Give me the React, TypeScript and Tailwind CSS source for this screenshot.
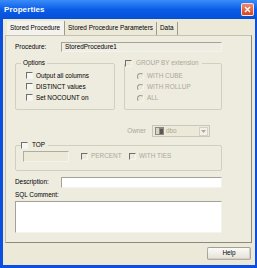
import React from 'react';

function Check({ disabled }: { disabled?: boolean }) {
  return (
    <span
      className={`inline-block w-[7px] h-[7px] shrink-0 border border-t-[#6f6f6f] border-l-[#6f6f6f] border-r-[#f4f4f0] border-b-[#f4f4f0] ${
        disabled ? 'bg-[#ECE9D8]' : 'bg-[#f7f6f2]'
      }`}
    />
  );
}

function Radio() {
  return (
    <span className="inline-block w-[7px] h-[7px] shrink-0 rounded-full border border-t-[#9c9a8f] border-l-[#9c9a8f] border-r-[#f4f4f0] border-b-[#f4f4f0] bg-[#ECE9D8]" />
  );
}

function Option({ label, disabled }: { label: string; disabled?: boolean }) {
  return (
    <div className="flex items-center gap-[3px] h-[11px]">
      <Check disabled={disabled} />
      <span className={disabled ? 'text-[#aca899]' : 'text-black'}>{label}</span>
    </div>
  );
}

function RadioOption({ label }: { label: string }) {
  return (
    <div className="flex items-center gap-[3px] h-[11px]">
      <Radio />
      <span className="text-[#aca899]">{label}</span>
    </div>
  );
}

export default function App() {
  const tabs = ['Stored Procedure', 'Stored Procedure Parameters', 'Data'];

  return (
    <div className="w-[257px] h-[268px] flex flex-col bg-[#0a4fe0] font-['Liberation_Sans',Arial,sans-serif] text-[6.4px] leading-none text-black overflow-hidden">
      {/* title bar */}
      <div className="h-[19px] shrink-0 flex items-center justify-between pl-[4px] pr-[3px] bg-gradient-to-b from-[#3a8cf7] via-[#0a5ce8] to-[#0550d8]">
        <span className="text-white font-bold text-[8px] tracking-[0.1px]">Properties</span>
        <span className="w-[13px] h-[13px] rounded-[2px] border border-white/80 bg-gradient-to-b from-[#e88a6c] to-[#d8431c] flex items-center justify-center">
          <svg width="7" height="7" viewBox="0 0 7 7">
            <path d="M1 1 L6 6 M6 1 L1 6" stroke="white" strokeWidth="1.4" />
          </svg>
        </span>
      </div>

      {/* body */}
      <div className="flex-1 ml-[3px] mr-[2px] mb-[3px] bg-[#ECE9D8] flex flex-col">
        {/* tabs */}
        <div className="flex items-end pl-[4px] pt-[3px] h-[16px] shrink-0">
          {tabs.map((t, i) => (
            <div
              key={t}
              className={`h-[13px] flex items-center px-[3px] border-r border-r-[#9d9a8c] ${
                i === 0 ? 'bg-[#f3f2ec] h-[14px] pr-[4px]' : 'bg-[#ECE9D8] pl-[3px]'
              }`}
            >
              {t}
            </div>
          ))}
        </div>

        {/* panel */}
        <div className="ml-[2px] mr-[3px] h-[208px] shrink-0 border border-[#c5c2b2] border-r-[#8d8a7d] border-b-[#8d8a7d] bg-[#eeebdf] pl-[9px] pt-[6px] flex flex-col">
          <div className="flex items-center h-[10px]">
            <span className="w-[46px]">Procedure:</span>
            <div className="w-[161px] h-[10px] border border-[#a4a196] border-r-[#f4f3ee] border-b-[#f4f3ee] bg-[#efece2] flex items-center pl-[3px]">
              StoredProcedure1
            </div>
          </div>

          <div className="flex gap-[9px] mt-[8px] w-[207px]">
            <fieldset className="w-[100px] h-[50px] border border-[#d0d0bf] rounded-[2px] px-[10px] pt-[4px]">
              <legend className="px-[2px] ml-[-5px]">Options</legend>
              <div className="flex flex-col">
                <Option label="Output all columns" />
                <Option label="DISTINCT values" />
                <Option label="Set NOCOUNT on" />
              </div>
            </fieldset>
            <fieldset className="w-[98px] h-[50px] border border-[#d0d0bf] rounded-[2px] px-[12px] pt-[4px]">
              <legend className="ml-[-12px] pr-[3px] flex items-center gap-[4px]">
                <Check disabled />
                <span className="text-[#aca899]">GROUP BY extension</span>
              </legend>
              <div className="flex flex-col">
                <RadioOption label="WITH CUBE" />
                <RadioOption label="WITH ROLLUP" />
                <RadioOption label="ALL" />
              </div>
            </fieldset>
          </div>

          <div className="flex items-center justify-end gap-[6px] w-[195px] mt-[15px] h-[12px]">
            <span className="text-[#aca899]">Owner</span>
            <div className="w-[58px] h-[12px] border border-[#c9c7ba] bg-[#ECE9D8] flex items-center justify-between pl-[2px] pr-[1px]">
              <div className="flex items-center gap-[2px]">
                <svg width="9" height="8" viewBox="0 0 9 8">
                  <rect x="0" y="0" width="9" height="8" fill="#8c8a80" />
                  <rect x="1" y="1" width="3" height="6" fill="#d8d5c8" />
                  <rect x="5" y="2" width="3" height="5" fill="#5a5850" />
                </svg>
                <span className="text-[#aca899]">dbo</span>
              </div>
              <div className="w-[9px] h-[9px] border border-[#d4d0c4] bg-[#f2f0e8] flex items-center justify-center">
                <svg width="5" height="3" viewBox="0 0 5 3">
                  <path d="M0 0 L5 0 L2.5 3 Z" fill="#aca899" />
                </svg>
              </div>
            </div>
          </div>

          <fieldset className="w-[207px] h-[29px] mt-[5px] border border-[#d0d0bf] rounded-[2px] px-[7px]">
            <legend className="ml-[-2px] pr-[3px] flex items-center gap-[4px]">
              <Check />
              <span>TOP</span>
            </legend>
            <div className="flex items-center mt-[2px]">
              <div className="w-[46px] h-[11px] border border-[#b0ada0] border-r-[#f4f3ee] border-b-[#f4f3ee] bg-[#ECE9D8]" />
              <div className="ml-[12px] w-[48px]">
                <Option label="PERCENT" disabled />
              </div>
              <Option label="WITH TIES" disabled />
            </div>
          </fieldset>

          <div className="flex items-center h-[11px] mt-[6px]">
            <span className="w-[46px]">Description:</span>
            <div className="w-[161px] h-[11px] border border-[#a4a196] border-r-[#f4f3ee] border-b-[#f4f3ee] bg-white" />
          </div>

          <div className="mt-[4px] h-[8px]">SQL Comment:</div>
          <div className="w-[207px] h-[32px] mt-[1px] border border-[#a4a196] border-r-[#f4f3ee] border-b-[#f4f3ee] bg-white" />
        </div>

        {/* footer */}
        <div className="flex justify-end pr-[4px] pt-[4px]">
          <div className="w-[44px] h-[13px] rounded-[2px] border border-[#3c3c3c]/40 bg-gradient-to-b from-[#fbfbf8] to-[#e4e1d6] flex items-center justify-center shadow-[inset_-1px_-1px_0_#d6d0c0]">
            Help
          </div>
        </div>
      </div>
    </div>
  );
}
